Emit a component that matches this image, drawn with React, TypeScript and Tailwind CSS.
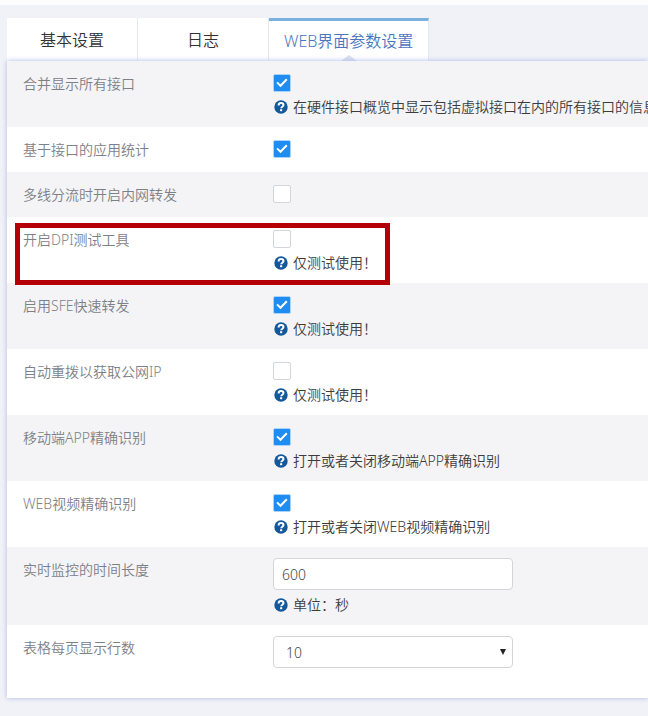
import React, { useState } from "react";
import clsx from "clsx";

type Row = {
  id: string;
  label: string;
  type: "checkbox" | "input" | "select";
  value: boolean | string;
  help?: string;
  marked?: boolean;
};

const tabs = ["基本设置", "日志", "WEB界面参数设置"];

const rows: Row[] = [
  {
    id: "merge",
    label: "合并显示所有接口",
    type: "checkbox",
    value: true,
    help: "在硬件接口概览中显示包括虚拟接口在内的所有接口的信息",
  },
  { id: "ifstat", label: "基于接口的应用统计", type: "checkbox", value: true },
  { id: "lan", label: "多线分流时开启内网转发", type: "checkbox", value: false },
  {
    id: "dpi",
    label: "开启DPI测试工具",
    type: "checkbox",
    value: false,
    help: "仅测试使用！",
    marked: true,
  },
  { id: "sfe", label: "启用SFE快速转发", type: "checkbox", value: true, help: "仅测试使用！" },
  { id: "redial", label: "自动重拨以获取公网IP", type: "checkbox", value: false, help: "仅测试使用！" },
  {
    id: "app",
    label: "移动端APP精确识别",
    type: "checkbox",
    value: true,
    help: "打开或者关闭移动端APP精确识别",
  },
  {
    id: "video",
    label: "WEB视频精确识别",
    type: "checkbox",
    value: true,
    help: "打开或者关闭WEB视频精确识别",
  },
  { id: "time", label: "实时监控的时间长度", type: "input", value: "600", help: "单位：秒" },
  { id: "lines", label: "表格每页显示行数", type: "select", value: "10" },
];

const HelpIcon: React.FC = () => (
  <svg viewBox="0 0 14 14" className="h-3.5 w-3.5 shrink-0" aria-hidden="true">
    <circle cx="7" cy="7" r="6.7" fill="#14589c" />
    <path
      d="M4.6 5.5C4.6 3.8 5.7 3.1 7.1 3.1s2.4.8 2.4 2c0 1.6-2.3 1.6-2.3 3.2"
      fill="none"
      stroke="#fff"
      strokeWidth="2"
    />
    <rect x="6.1" y="9.2" width="2.1" height="2" fill="#fff" />
  </svg>
);

const Control: React.FC<{ row: Row }> = ({ row }) => {
  if (row.type === "checkbox") {
    return (
      <div className="flex h-[22px] items-center">
        <span className="relative flex">
          <input
            id={row.id}
            type="checkbox"
            defaultChecked={row.value as boolean}
            className="peer h-[18px] w-[18px] appearance-none rounded-[2px] border border-[#d3d5dc] bg-white checked:border-[#a9d3fb] checked:bg-[#1e8cf0]"
          />
          <svg
            viewBox="0 0 18 18"
            className="pointer-events-none absolute inset-0 hidden peer-checked:block"
            aria-hidden="true"
          >
            <path d="M4 8.4l3.5 3.4 6.3-6.6" fill="none" stroke="#fff" strokeWidth="2" />
          </svg>
        </span>
      </div>
    );
  }

  if (row.type === "input") {
    return (
      <input
        id={row.id}
        type="text"
        defaultValue={row.value as string}
        className="mb-0.5 block h-8 w-60 rounded border border-[#d3d5d9] bg-white px-2 text-[#444]"
      />
    );
  }

  return (
    <div className="relative w-60">
      <select
        id={row.id}
        defaultValue={row.value as string}
        className="block h-8 w-full appearance-none rounded border border-[#d3d5d9] bg-white px-3 pt-0.5 text-[#444]"
      >
        <option>10</option>
        <option>20</option>
        <option>50</option>
      </select>
      <svg
        viewBox="0 0 6 6"
        className="pointer-events-none absolute top-[13px] right-[7px] h-1.5 w-1.5"
        aria-hidden="true"
      >
        <path d="M0 0h6L3 6z" fill="#222" />
      </svg>
    </div>
  );
};

const App: React.FC = () => {
  const [active, setActive] = useState<number>(2);

  return (
    <div className="min-h-screen overflow-hidden bg-[#f1f2f7] font-['Noto_Sans','Noto_Sans_CJK_SC',sans-serif] text-sm font-[350]">
      <div className="h-[5px] bg-[#fdfdfe]" />
      <div className="mt-[13px] ml-[7px]">
        <div className="flex h-[43px]" role="tablist">
          {tabs.map((tab, i) => (
            <button
              key={tab}
              type="button"
              role="tab"
              aria-selected={active === i}
              onClick={() => setActive(i)}
              className={clsx(
                "relative min-w-[131px] border-r border-[#e6e8ef] bg-white px-[15px] text-base",
                active === i
                  ? "border-t-[3px] border-t-[#7ab1de] text-[#4a76c0]"
                  : "text-[#333]"
              )}
            >
              {tab}
              {active === i && (
                <svg
                  viewBox="0 0 16 6"
                  className="absolute bottom-0 left-1/2 h-1.5 w-4 -translate-x-1/2"
                  aria-hidden="true"
                >
                  <path d="M0 6l8-6 8 6z" fill="#d9deef" />
                </svg>
              )}
            </button>
          ))}
        </div>

        <form className="relative bg-white pb-[18px] shadow-[0_0_5px_#a9b9ea]">
          {rows.map((row) => (
            <div
              key={row.id}
              className="relative flex px-4 pt-[11px] pb-3 odd:bg-[#f4f4f6]"
            >
              <label htmlFor={row.id} className="h-[22px] w-[250px] shrink-0 leading-6 text-[#7c8188]">
                {row.label}
              </label>
              <div>
                <Control row={row} />
                {row.help && (
                  <p className="flex items-center gap-[5px] pt-1 pl-px leading-[17px] whitespace-nowrap text-[#3c3c3c]">
                    <HelpIcon />
                    {row.help}
                  </p>
                )}
              </div>
              {row.marked && (
                <div className="pointer-events-none absolute top-1.5 -bottom-0.5 left-2 z-10 w-[375px] border-[5px] border-[#b40004]" />
              )}
            </div>
          ))}
        </form>
      </div>
    </div>
  );
};

export default App;
